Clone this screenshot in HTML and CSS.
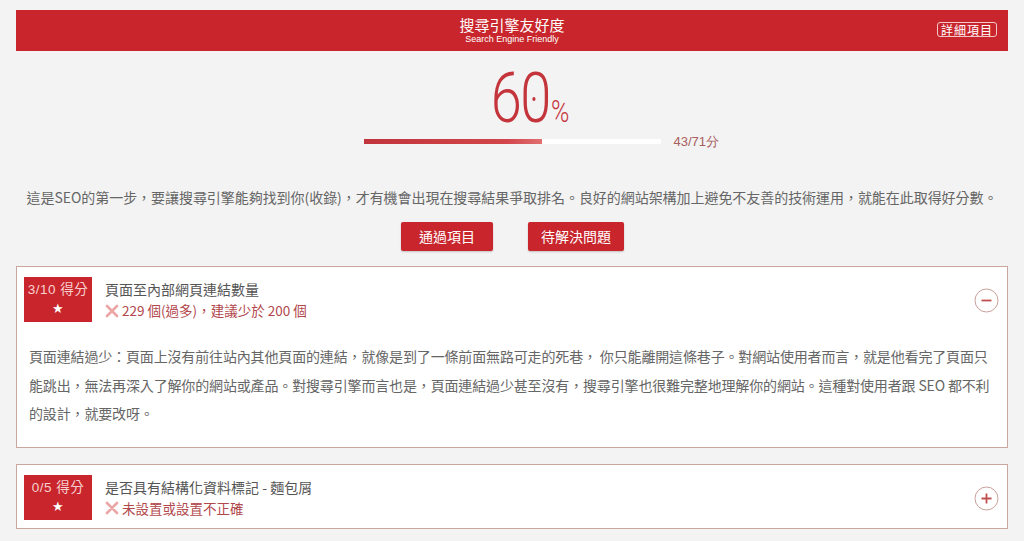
FILE: index.html
```html
<!DOCTYPE html>
<html lang="zh-Hant">
<head>
<meta charset="utf-8">
<title>搜尋引擎友好度</title>
<link rel="stylesheet" href="styles.css">
</head>
<body>
<div class="page">
  <header class="topbar">
    <div class="topbar-title">搜尋引擎友好度</div>
    <div class="topbar-sub">Search Engine Friendly</div>
    <span class="detail-btn">詳細項目</span>
  </header>

  <section class="score">
    <div class="score-num"><span class="digits">6<span class="zero">0</span></span><span class="pct">%</span></div>
    <div class="bar-row">
      <div></div>
      <div class="bar"><div class="bar-fill" style="width:60%"></div></div>
      <div class="bar-label">43/71分</div>
    </div>
  </section>

  <p class="desc">這是SEO的第一步，要讓搜尋引擎能夠找到你(收錄)，才有機會出現在搜尋結果爭取排名。良好的網站架構加上避免不友善的技術運用，就能在此取得好分數。</p>

  <div class="tabs">
    <span class="tab">通過項目</span>
    <span class="tab">待解決問題</span>
  </div>

  <article class="card">
    <div class="card-head">
      <div class="badge"><div>3/10 得分</div><div class="star">★</div></div>
      <div class="card-info">
        <div class="card-title">頁面至內部網頁連結數量</div>
        <div class="card-status"><svg class="xicon" width="14" height="14" viewBox="0 0 14 14"><path d="M2 2L12 12M12 2L2 12" stroke="#eaa5a5" stroke-width="2.6" stroke-linecap="round"/></svg>229 個(過多)，建議少於 200 個</div>
      </div>
      <svg class="toggle" width="25" height="25" viewBox="0 0 25 25"><circle cx="12.5" cy="12.5" r="11.5" fill="#fff" stroke="#c9a09a" stroke-width="1"/><path d="M7.5 12.5H17.5" stroke="#c0504f" stroke-width="1.8"/></svg>
    </div>
    <p class="card-body">頁面連結過少：頁面上沒有前往站內其他頁面的連結，就像是到了一條前面無路可走的死巷， 你只能離開這條巷子。對網站使用者而言，就是他看完了頁面只能跳出，無法再深入了解你的網站或產品。對搜尋引擎而言也是，頁面連結過少甚至沒有，搜尋引擎也很難完整地理解你的網站。這種對使用者跟 SEO 都不利的設計，就要改呀。</p>
  </article>

  <article class="card">
    <div class="card-head">
      <div class="badge"><div>0/5 得分</div><div class="star">★</div></div>
      <div class="card-info">
        <div class="card-title">是否具有結構化資料標記 - 麵包屑</div>
        <div class="card-status"><svg class="xicon" width="14" height="14" viewBox="0 0 14 14"><path d="M2 2L12 12M12 2L2 12" stroke="#eaa5a5" stroke-width="2.6" stroke-linecap="round"/></svg>未設置或設置不正確</div>
      </div>
      <svg class="toggle" width="25" height="25" viewBox="0 0 25 25"><circle cx="12.5" cy="12.5" r="11.5" fill="#fff" stroke="#c9a09a" stroke-width="1"/><path d="M7.5 12.5H17.5M12.5 7.5V17.5" stroke="#c0504f" stroke-width="1.8"/></svg>
    </div>
  </article>
</div>
</body>
</html>
```

FILE: styles.css
```css
html, body {
  margin: 0;
  padding: 0;
  background: #f3f3f3;
  font-family: "Noto Sans CJK TC", "Noto Sans", sans-serif;
  color: #555;
}
.page {
  padding: 10px 16px 0;
  height: 541px;
  box-sizing: border-box;
  overflow: hidden;
}
.topbar {
  position: relative;
  background: #c8262c;
  height: 41px;
  box-sizing: border-box;
  padding-top: 5px;
  display: flex;
  flex-direction: column;
  align-items: center;
  color: #fff;
}
.topbar-title {
  font-size: 15px;
  line-height: 19px;
}
.topbar-sub {
  font-family: "Liberation Sans", sans-serif;
  font-size: 9px;
  line-height: 11px;
}
.detail-btn {
  position: absolute;
  right: 11px;
  top: 12px;
  font-size: 12px;
  line-height: 13px;
  padding: 0 3px;
  border: 1px solid #f2c6c6;
  border-radius: 3px;
  letter-spacing: 1px;
}
.score {
  display: flex;
  flex-direction: column;
  align-items: center;
}
.score-num {
  color: #c4343b;
  margin-top: 12px;
  height: 70px;
  display: flex;
  align-items: baseline;
  padding-left: 26px;
}
.digits {
  font-family: "Roboto", sans-serif;
  font-weight: 300;
  font-size: 70px;
  line-height: 70px;
  display: inline-block;
  transform: scaleX(0.8);
  transform-origin: right bottom;
  letter-spacing: -2px;
}
.zero {
  position: relative;
}
.zero::after {
  content: "";
  position: absolute;
  left: 50%;
  top: 50%;
  width: 4px;
  height: 4px;
  margin: -1px 0 0 -3px;
  border-radius: 50%;
  background: #c4343b;
}
.pct {
  font-family: "Roboto", sans-serif;
  font-weight: 300;
  font-size: 31px;
  line-height: 31px;
  margin-left: 2px;
  display: inline-block;
  transform: scaleX(0.8);
  transform-origin: left bottom;
}
.bar-row {
  display: grid;
  grid-template-columns: 1fr 297px 1fr;
  align-items: center;
  width: 100%;
  margin-top: 1px;
}
.bar {
  height: 5px;
  background: #fff;
}
.bar-fill {
  height: 100%;
  background: linear-gradient(to right, #c0353b, #d2454b 80%, #e07070);
}
.bar-label {
  padding-left: 13px;
  font-family: "Liberation Sans", sans-serif;
  font-size: 13px;
  line-height: 15px;
  color: #a8605f;
}
.desc {
  margin: 38px 0 0;
  text-align: center;
  font-size: 14px;
  line-height: 20px;
  letter-spacing: -0.05px;
  color: #666;
}
.tabs {
  display: flex;
  justify-content: center;
  gap: 35px;
  margin-top: 15px;
  padding-left: 1px;
}
.tab {
  min-width: 92px;
  box-sizing: border-box;
  padding: 0 13px;
  height: 29px;
  line-height: 29px;
  text-align: center;
  background: #c8262c;
  color: #fff;
  font-size: 14px;
  border-radius: 2px;
  box-shadow: 0 1px 2px rgba(0,0,0,0.2);
}
.card {
  margin-top: 15px;
  background: #fff;
  border: 1px solid #caa69f;
}
.card + .card {
  margin-top: 16px;
}
.card-head {
  display: flex;
  align-items: flex-start;
  padding: 10px 8px 8px 7px;
}
.badge {
  width: 68px;
  height: 45px;
  background: #c8262c;
  color: #f8d0d0;
  text-align: center;
  font-family: "Liberation Sans", "Noto Sans CJK TC", sans-serif;
  font-size: 13.5px;
  line-height: 20px;
  padding-top: 3px;
  box-sizing: border-box;
  letter-spacing: 0.5px;
}
.badge .star {
  color: #fff;
  font-family: "DejaVu Sans", sans-serif;
  font-size: 13px;
  line-height: 18px;
}
.card-info {
  flex: 1;
  padding-left: 13px;
  padding-top: 2px;
}
.card-title {
  font-size: 14px;
  line-height: 21px;
  color: #555;
}
.card-status {
  display: flex;
  align-items: center;
  gap: 3px;
  font-size: 13.5px;
  line-height: 21px;
  color: #b2474c;
}
.toggle {
  margin-top: 11px;
}
.card-body {
  margin: 0;
  padding: 12px 12px 19px 12px;
  font-size: 14px;
  line-height: 28.5px;
  letter-spacing: -0.15px;
  color: #666;
}
```
